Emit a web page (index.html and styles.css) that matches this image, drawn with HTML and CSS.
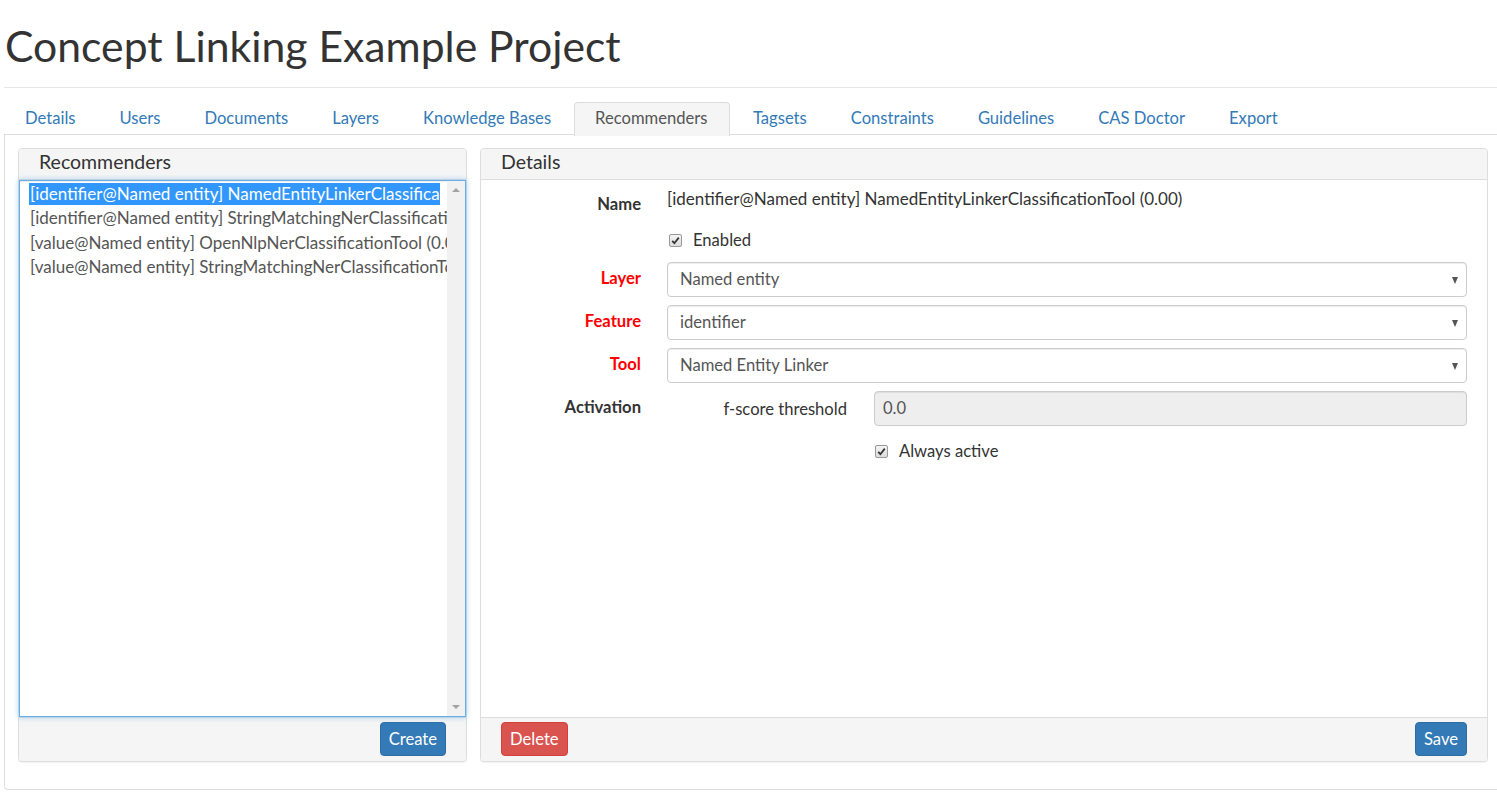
FILE: index.html
```html
<!DOCTYPE html>
<html>
<head>
<meta charset="utf-8">
<title>Concept Linking Example Project</title>
<link rel="stylesheet" href="styles.css">
</head>
<body>
<div class="page">
  <h1 class="title">Concept Linking Example Project</h1>
  <ul class="tabs">
    <li class="tab"><a>Details</a></li>
    <li class="tab"><a>Users</a></li>
    <li class="tab"><a>Documents</a></li>
    <li class="tab"><a>Layers</a></li>
    <li class="tab"><a>Knowledge Bases</a></li>
    <li class="tab active"><a>Recommenders</a></li>
    <li class="tab"><a>Tagsets</a></li>
    <li class="tab"><a>Constraints</a></li>
    <li class="tab"><a>Guidelines</a></li>
    <li class="tab"><a>CAS Doctor</a></li>
    <li class="tab"><a>Export</a></li>
  </ul>
  <div class="tab-content">
    <div class="panel panel-left">
      <div class="panel-heading">Recommenders</div>
      <div class="list">
        <div class="list-items">
          <div class="option selected">[identifier@Named entity] NamedEntityLinkerClassificationTool (0.00)</div>
          <div class="option">[identifier@Named entity] StringMatchingNerClassificationTool (0.00)</div>
          <div class="option">[value@Named entity] OpenNlpNerClassificationTool (0.00)</div>
          <div class="option">[value@Named entity] StringMatchingNerClassificationTool (0.00)</div>
        </div>
        <div class="scrollbar">
          <span class="arrow arrow-up"></span>
          <span class="arrow arrow-down"></span>
        </div>
      </div>
      <div class="panel-footer footer-right">
        <button class="btn btn-primary">Create</button>
      </div>
    </div>
    <div class="panel panel-right">
      <div class="panel-heading">Details</div>
      <div class="panel-body">
        <div class="row row-name">
          <div class="label">Name</div>
          <div class="control value">[identifier@Named entity] NamedEntityLinkerClassificationTool (0.00)</div>
        </div>
        <div class="row row-enabled">
          <div class="label"></div>
          <div class="control check"><span class="checkbox"><svg viewBox="0 0 13 13" width="13" height="13"><path d="M3.2 6.8 L5.4 9.2 L9.8 3.6" fill="none" stroke="#333" stroke-width="1.8"/></svg></span><span class="check-label">Enabled</span></div>
        </div>
        <div class="row row-field">
          <div class="label required">Layer</div>
          <div class="control"><div class="select">Named entity<span class="caret"></span></div></div>
        </div>
        <div class="row row-field">
          <div class="label required">Feature</div>
          <div class="control"><div class="select">identifier<span class="caret"></span></div></div>
        </div>
        <div class="row row-field">
          <div class="label required">Tool</div>
          <div class="control"><div class="select">Named Entity Linker<span class="caret"></span></div></div>
        </div>
        <div class="row row-field">
          <div class="label">Activation</div>
          <div class="control sub">
            <div class="sub-label">f-score threshold</div>
            <div class="input disabled">0.0</div>
          </div>
        </div>
        <div class="row row-always">
          <div class="label"></div>
          <div class="control sub">
            <div class="sub-label"></div>
            <div class="check"><span class="checkbox"><svg viewBox="0 0 13 13" width="13" height="13"><path d="M3.2 6.8 L5.4 9.2 L9.8 3.6" fill="none" stroke="#333" stroke-width="1.8"/></svg></span><span class="check-label">Always active</span></div>
          </div>
        </div>
      </div>
      <div class="panel-footer footer-split">
        <button class="btn btn-danger">Delete</button>
        <button class="btn btn-primary">Save</button>
      </div>
    </div>
  </div>
</div>
</body>
</html>
```
FILE: styles.css
```css
html, body {
  margin: 0;
  padding: 0;
  overflow: hidden;
  background: #fff;
}
body {
  font-family: Lato, "Open Sans", sans-serif;
  font-size: 16.6px;
  color: #333;
}
.page {
  width: 1498px;
  margin-left: 4px;
}
.title {
  margin: 0;
  padding: 24px 0 0 1px;
  height: 63px;
  font-size: 42.7px;
  font-weight: 400;
  line-height: 44px;
  color: #333;
  border-bottom: 1px solid #e6e6e6;
}
.tabs {
  list-style: none;
  margin: 14px 0 0;
  padding: 0;
  display: flex;
  border-bottom: 1px solid #ddd;
  height: 32px;
}
.tab {
  margin-right: 2px;
  margin-bottom: -1px;
}
.tab a {
  display: block;
  padding: 4px 20px 6px;
  line-height: 22px;
  color: #337ab7;
  border: 1px solid transparent;
  border-bottom: none;
  border-radius: 4px 4px 0 0;
  height: 22px;
}
.tab.active a {
  color: #555;
  background: #f5f5f5;
  border-color: #ddd;
  height: 23px;
  padding-left: 20px;
  padding-right: 21.5px;
}
.tab-content {
  border: 1px solid #ddd;
  border-top: none;
  border-radius: 0 0 4px 4px;
  padding: 13px 13px 27px;
  display: flex;
  gap: 13px;
  height: 614px;
}
.panel {
  border: 1px solid #ddd;
  border-radius: 4px;
  background: #fff;
  box-shadow: 0 1px 1px rgba(0,0,0,0.05);
  display: flex;
  flex-direction: column;
  box-sizing: border-box;
  height: 614px;
}
.panel-left { width: 449px; }
.panel-right { width: 1008px; }
.panel-heading {
  background: #f5f5f5;
  border-bottom: 1px solid #ddd;
  border-radius: 3px 3px 0 0;
  height: 30px;
  padding: 0 20px;
  font-size: 19.5px;
  line-height: 26px;
  color: #333;
}
.list {
  flex: 1;
  display: flex;
  border: 1px solid #66afe9;
  margin: 0;
  box-shadow: inset 0 1px 1px rgba(0,0,0,.075), 0 0 6px rgba(102,175,233,.6);
  overflow: hidden;
  background: #fff;
  position: relative;
  z-index: 1;
}
.list-items {
  flex: 1;
  overflow: hidden;
  padding: 2px 0 0 9px;
  color: #555;
  font-size: 17px;
}
.option {
  white-space: nowrap;
  width: 410px;
  height: 24.4px;
  line-height: 22px;
  padding-left: 1px;
  overflow: hidden;
}
.option.selected {
  background: linear-gradient(#3297fd, #3297fd) no-repeat 0 0 / 100% 22px;
  color: #fff;
}
.option:not(.selected) {
  width: 418px;
}
.scrollbar {
  width: 18px;
  background: #f1f1f1;
  position: relative;
}
.arrow {
  position: absolute;
  left: 5px;
  width: 0;
  height: 0;
  border-left: 4px solid transparent;
  border-right: 4px solid transparent;
}
.arrow-up {
  top: 7px;
  border-bottom: 4px solid #a3a3a3;
}
.arrow-down {
  bottom: 7px;
  border-top: 4px solid #a3a3a3;
}
.panel-footer {
  background: #f5f5f5;
  border-top: 1px solid #ddd;
  border-radius: 0 0 3px 3px;
  padding: 4px 20px 5px;
  height: 34px;
  display: flex;
  align-items: center;
}
.footer-right { justify-content: flex-end; }
.footer-split { justify-content: space-between; }
.btn {
  font-family: Lato, "Open Sans", sans-serif;
  font-size: 16.6px;
  height: 34px;
  line-height: 32px;
  padding: 0 8px;
  border-radius: 4px;
  border: 1px solid transparent;
  color: #fff;
  cursor: pointer;
}
.btn-primary {
  background: #337ab7;
  border-color: #2e6da4;
}
.btn-danger {
  background: #d9534f;
  border-color: #d43f3a;
}
.panel-body {
  flex: 1;
  padding: 8px 21px 0 20px;
}
.row {
  display: grid;
  grid-template-columns: 140px 800px;
  column-gap: 26px;
  align-items: center;
}
.label {
  text-align: right;
  font-weight: 700;
  color: #333;
}
.label.required { color: #ff0000; }
.row-field .label { padding-bottom: 3px; }
.row-name {
  height: 28px;
  margin-bottom: 10px;
}
.row-name .label { padding-top: 3px; }
.row-name .value { margin-top: -8px; font-size: 17px; }
.row-enabled {
  height: 28px;
  margin-bottom: 8px;
}
.row-field {
  height: 35px;
  margin-bottom: 8px;
}
.row-always {
  height: 28px;
  margin-top: 11px;
}
.check {
  display: flex;
  align-items: center;
}
.row-enabled .check { padding-left: 2px; }
.checkbox {
  display: inline-block;
  width: 11px;
  height: 11px;
  border: 1px solid #999;
  border-radius: 2px;
  background: linear-gradient(#f4f4f4, #dcdcdc);
  margin-right: 11px;
  position: relative;
}
.checkbox svg {
  position: absolute;
  left: -1px;
  top: -1px;
}
.select {
  height: 33px;
  border: 1px solid #ccc;
  border-radius: 4px;
  box-shadow: inset 0 1px 1px rgba(0,0,0,.075);
  padding-left: 12px;
  line-height: 33px;
  color: #555;
  position: relative;
}
.caret {
  position: absolute;
  right: 8px;
  top: 14px;
  width: 0;
  height: 0;
  border-left: 3.5px solid transparent;
  border-right: 3.5px solid transparent;
  border-top: 7px solid #555;
}
.sub {
  display: grid;
  grid-template-columns: 180px 593px;
  column-gap: 27px;
  align-items: center;
}
.sub-label {
  text-align: right;
  color: #333;
}
.input {
  height: 33px;
  border: 1px solid #ccc;
  border-radius: 4px;
  padding-left: 8px;
  line-height: 33px;
  color: #555;
}
.input.disabled {
  background: #eee;
  box-shadow: inset 0 1px 1px rgba(0,0,0,.075);
}
.row-always .check { padding-left: 1px; }
```
